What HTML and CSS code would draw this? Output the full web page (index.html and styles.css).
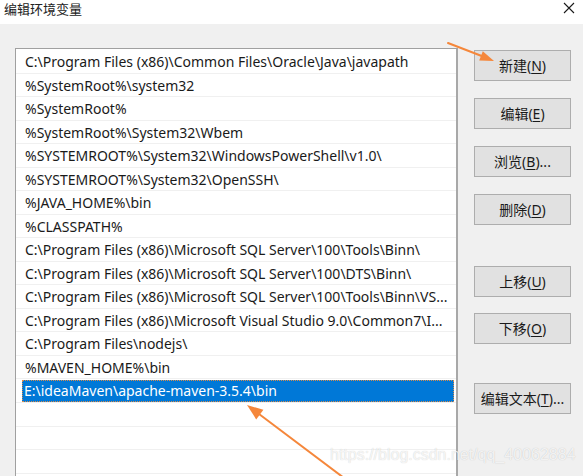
FILE: index.html
```html
<!DOCTYPE html>
<html lang="zh-CN">
<head>
<meta charset="utf-8">
<title>编辑环境变量</title>
<link rel="stylesheet" href="styles.css">
</head>
<body>
<div class="window">
  <div class="titlebar">
    <span class="title">编辑环境变量</span>
    <svg class="close" width="12" height="12" viewBox="0 0 12 12"><path d="M1 1 L11 11 M11 1 L1 11" stroke="#1a1a1a" stroke-width="1.1" fill="none"/></svg>
  </div>
  <div class="content">
    <div class="list">
      <div class="row">C:\Program Files (x86)\Common Files\Oracle\Java\javapath</div>
      <div class="row">%SystemRoot%\system32</div>
      <div class="row">%SystemRoot%</div>
      <div class="row">%SystemRoot%\System32\Wbem</div>
      <div class="row">%SYSTEMROOT%\System32\WindowsPowerShell\v1.0\</div>
      <div class="row">%SYSTEMROOT%\System32\OpenSSH\</div>
      <div class="row">%JAVA_HOME%\bin</div>
      <div class="row">%CLASSPATH%</div>
      <div class="row">C:\Program Files (x86)\Microsoft SQL Server\100\Tools\Binn\</div>
      <div class="row">C:\Program Files (x86)\Microsoft SQL Server\100\DTS\Binn\</div>
      <div class="row">C:\Program Files (x86)\Microsoft SQL Server\100\Tools\Binn\VS...</div>
      <div class="row">C:\Program Files (x86)\Microsoft Visual Studio 9.0\Common7\I...</div>
      <div class="row">C:\Program Files\nodejs\</div>
      <div class="row">%MAVEN_HOME%\bin</div>
      <div class="row row-selected"><span class="edit">E:\ideaMaven\apache-maven-3.5.4\bin</span></div>
      <div class="row"></div>
      <div class="row"></div>
      <div class="row"></div>
    </div>
    <div class="buttons">
      <div class="group">
        <button class="btn">新建(<u>N</u>)</button>
        <button class="btn">编辑(<u>E</u>)</button>
        <button class="btn">浏览(<u>B</u>)...</button>
        <button class="btn">删除(<u>D</u>)</button>
      </div>
      <div class="group group-move">
        <button class="btn">上移(<u>U</u>)</button>
        <button class="btn">下移(<u>O</u>)</button>
      </div>
      <div class="group group-text">
        <button class="btn">编辑文本(<u>T</u>)...</button>
      </div>
    </div>
  </div>
  <svg class="arrows" width="583" height="476" viewBox="0 0 583 476">
    <path d="M448 43 L483 56.5" stroke="#f5873b" stroke-width="2" stroke-linecap="round" fill="none"/>
    <polygon points="494,61 479.2,60.6 482.8,51.2" fill="#f5873b"/>
    <path d="M352 484 L259 414" stroke="#f5873b" stroke-width="2" stroke-linecap="round" fill="none"/>
    <polygon points="247,405 263.4,409.8 256.2,419.4" fill="#f5873b"/>
  </svg>
  <div class="watermark">https://blog.csdn.net/qq_40062884</div>
</div>
</body>
</html>
```
FILE: styles.css
```css
html, body {
  margin: 0;
  padding: 0;
}
body {
  width: 583px;
  height: 476px;
  overflow: hidden;
  background: #f0f0f0;
  font-family: "Noto Sans", "Noto Sans CJK SC", sans-serif;
  color: #1a1a1a;
}
.window {
  position: relative;
  width: 583px;
  height: 476px;
  overflow: hidden;
}
.titlebar {
  height: 24px;
  background: #ffffff;
  display: flex;
  align-items: flex-start;
  justify-content: space-between;
}
.title {
  font-family: "Noto Sans CJK SC", sans-serif;
  font-size: 13px;
  line-height: 18px;
  padding-left: 4px;
  color: #222;
}
.close {
  margin-top: 2px;
  margin-right: 8px;
}
.content {
  display: flex;
  padding: 24px 13px 0 15px;
  gap: 16px;
}
.list {
  width: 440px;
  height: 470px;
  background: #ffffff;
  border-top: 1px solid #a0a0a0;
  border-left: 1px solid #a0a0a0;
  border-right: 2px solid #a8a8a8;
  padding-top: 1px;
  flex-shrink: 0;
}
.row {
  box-sizing: border-box;
  height: 23.54px;
  border-bottom: 1px solid #f0f0f0;
  padding-left: 9px;
  font-size: 14px;
  line-height: 23.5px;
  white-space: nowrap;
  overflow: hidden;
}
.row-selected {
  padding: 1px 2px 0 6px;
}
.edit {
  display: block;
  box-sizing: border-box;
  height: 22px;
  background: #0078d7;
  color: #ffffff;
  border: 1px dotted #d98c4a;
  padding-left: 1px;
  line-height: 20px;
}
.buttons {
  display: flex;
  flex-direction: column;
  padding-top: 2px;
}
.group {
  display: flex;
  flex-direction: column;
  gap: 17px;
}
.group-move {
  margin-top: 41px;
  gap: 16px;
}
.group-text {
  margin-top: 39px;
}
.btn {
  box-sizing: border-box;
  width: 97px;
  height: 31px;
  background: #e1e1e1;
  border: 1px solid #adadad;
  font-family: "Noto Sans", "Noto Sans CJK SC", sans-serif;
  font-size: 14px;
  color: #1a1a1a;
  padding: 0;
  line-height: 28px;
}
.btn u {
  text-underline-offset: 2px;
}
.arrows {
  position: absolute;
  left: 0;
  top: 0;
  pointer-events: none;
}
.watermark {
  position: absolute;
  left: 330px;
  top: 446px;
  font-family: "Liberation Sans", sans-serif;
  font-size: 16px;
  color: rgba(255, 255, 255, 0.8);
  text-shadow: 0 0 1px rgba(0, 0, 0, 0.22);
  white-space: nowrap;
}
```
